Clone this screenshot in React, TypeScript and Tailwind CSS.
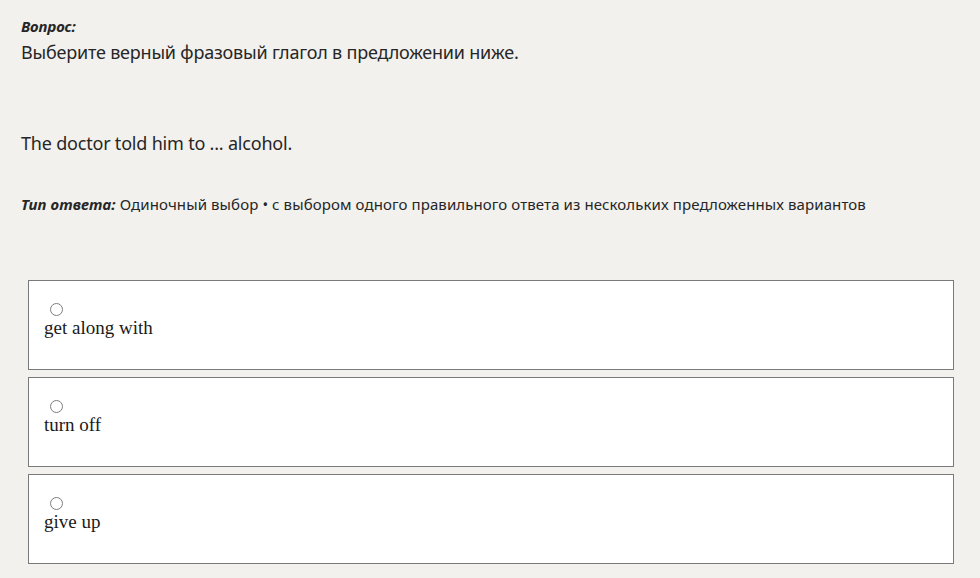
import React from "react";

const options = ["get along with", "turn off", "give up"];

export default function App() {
  return (
    <div className="w-[980px] h-[578px] bg-[#f2f1ee] overflow-hidden text-[#262626]" style={{ fontFamily: '"Noto Sans", "Open Sans", sans-serif' }}>
      <div className="pl-[21px] pt-[16px] flex flex-col">
        <div className="text-[15px] leading-[21px] font-bold italic tracking-[-0.15px]">Вопрос:</div>
        <div className="text-[18px] leading-[26px] mt-[2px] tracking-[-0.2px]">Выберите верный фразовый глагол в предложении ниже.</div>
        <div className="text-[18px] leading-[26px] mt-[65px] tracking-[-0.2px]">The doctor told him to ... alcohol.</div>
        <div className="text-[15px] leading-[21px] mt-[38px] tracking-[0.1px]">
          <span className="font-bold italic">Тип ответа:</span> Одиночный выбор • с выбором одного правильного ответа из нескольких предложенных вариантов
        </div>
      </div>
      <div className="ml-[28px] mr-[26px] mt-[65px] flex flex-col gap-[7px]">
        {options.map((o) => (
          <div key={o} className="h-[90px] border border-[#7a7a7a] bg-white pl-[15px] pt-[22px]">
            <div className="ml-[6px] w-[13px] h-[13px] rounded-full border border-[#7d7d7d] bg-white" />
            <div className="text-[19px] leading-[24px] text-[#1a1a1a]" style={{ fontFamily: '"Liberation Serif", serif' }}>{o}</div>
          </div>
        ))}
      </div>
    </div>
  );
}
